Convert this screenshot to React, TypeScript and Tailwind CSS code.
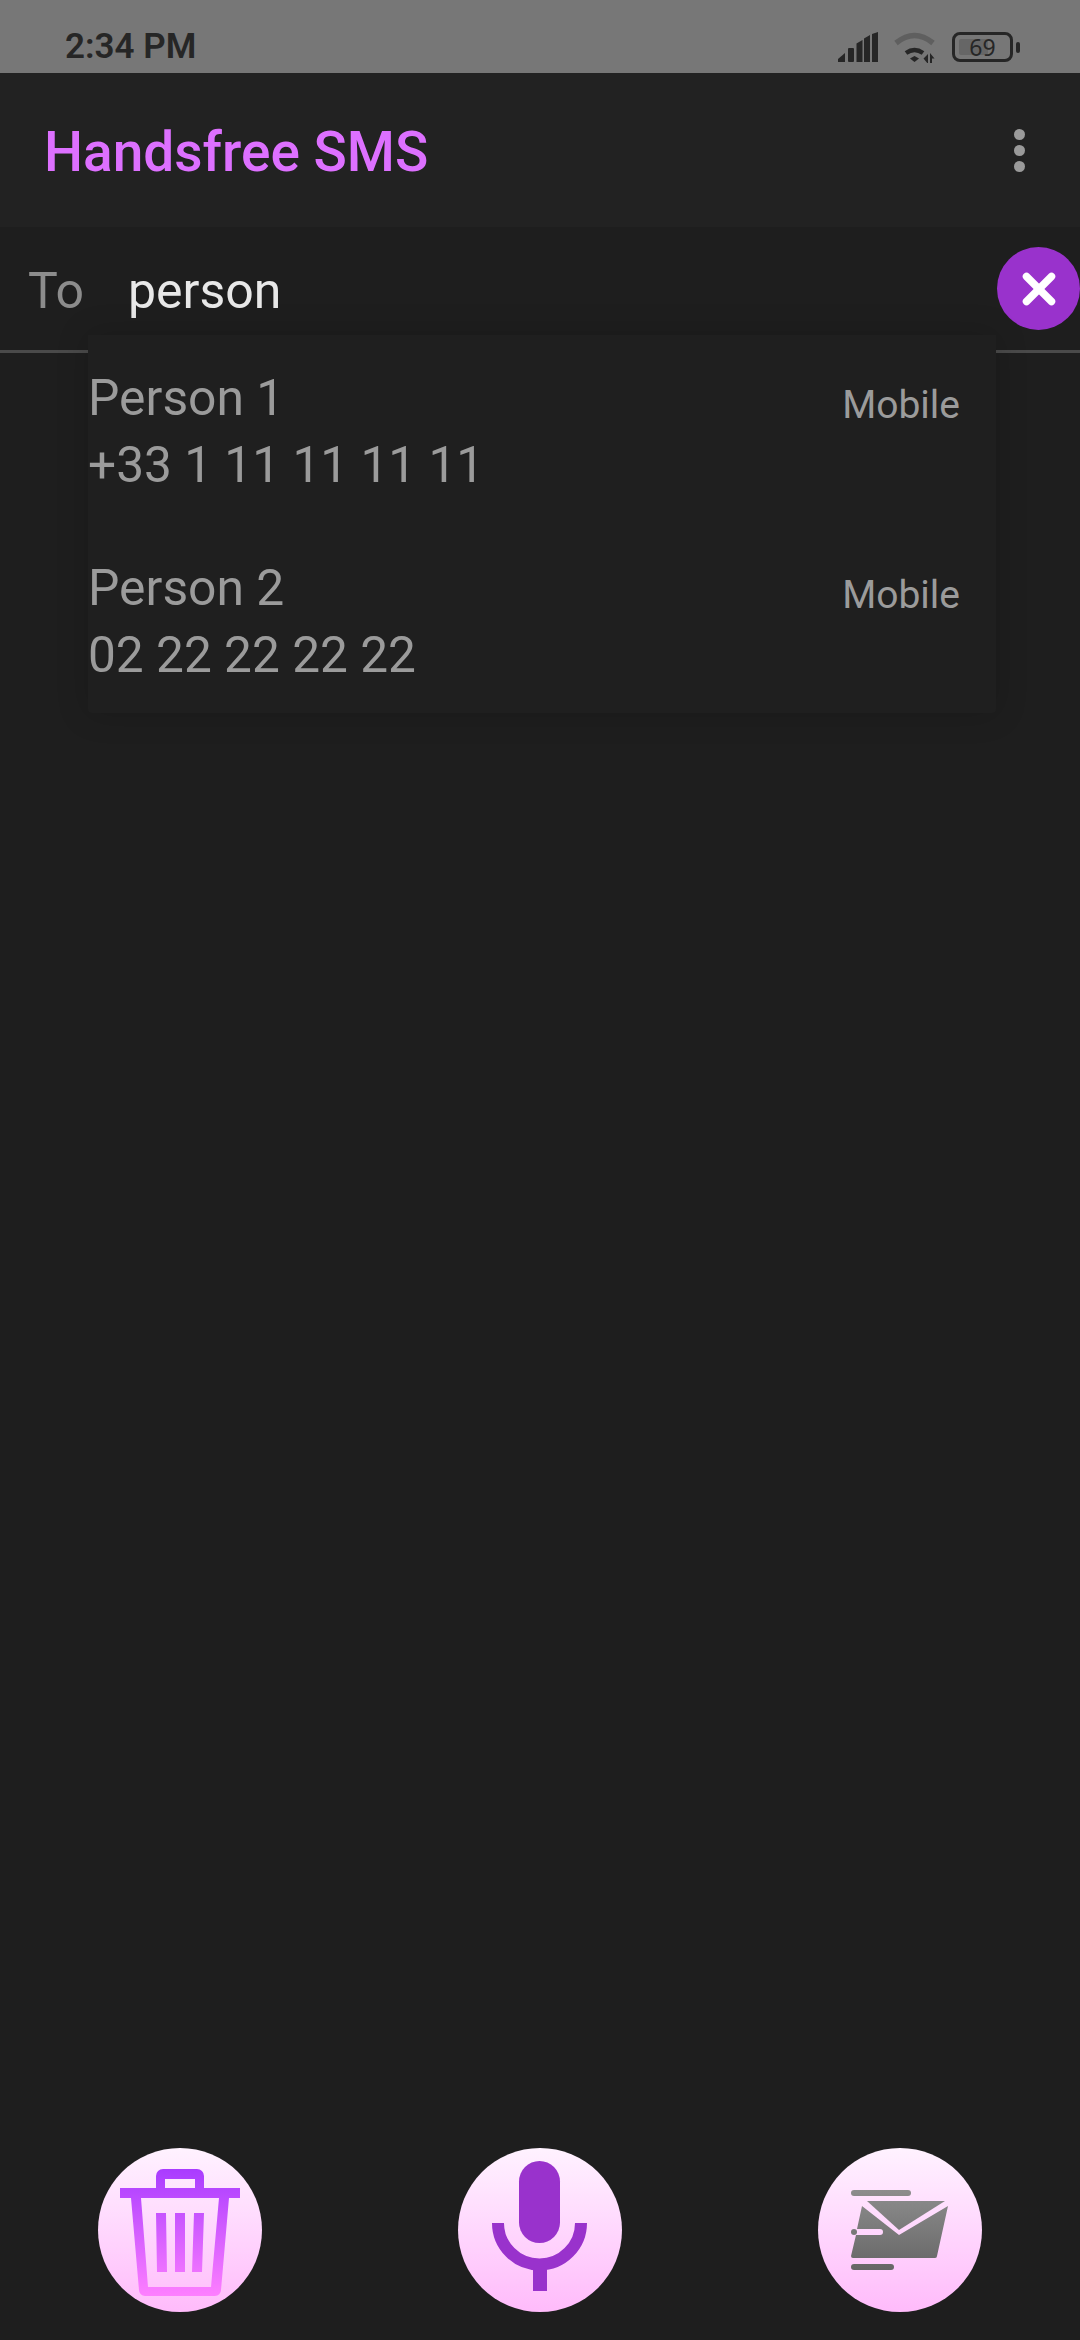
import { X } from "lucide-react";

const contacts = [
  { name: "Person 1", phone: "+33 1 11 11 11 11", type: "Mobile" },
  { name: "Person 2", phone: "02 22 22 22 22", type: "Mobile" },
];

function StatusIcons() {
  return (
    <div className="flex items-center text-[#262626]">
      <svg width="42" height="30" viewBox="0 0 42 30" fill="currentColor" className="mr-[14px]">
        <path d="M1 30v-3l7-6v9z" />
        <rect x="11" y="16" width="6" height="14" rx="1" />
        <path d="M19.500 30V11.500l6-3.500V30z" />
        <path d="M27 30V6.500l6-3.500V30z" />
        <path d="M35 30V2l6-2v30z" />
      </svg>
      <svg width="44" height="32" viewBox="0 0 44 32" fill="none" className="mr-[15px]">
        <path d="M3 12Q21.500-3 40 12" stroke="#5f5f5f" strokeWidth="5.500" />
        <path d="M13 22Q21.500 16 30 22" stroke="currentColor" strokeWidth="4.500" />
        <path d="M17 27.500l4.500-2.500 4.500 2.500-4.500 3.500z" fill="currentColor" />
        <path d="M35 23v10l-4.500-5.500zM37 33V22l4.500 5.500H39V33z" fill="currentColor" />
      </svg>
      <div className="relative flex h-[30px] w-[61px] items-center justify-center rounded-[8px] border-[3px] border-[#262626]">
        <div className="absolute left-[4px] top-[4px] h-[16px] w-[29px] rounded-[2px] bg-[#666666]" />
        <span className="relative font-['Noto_Sans',sans-serif] text-[23px] leading-none">69</span>
      </div>
      <div className="ml-[3px] h-[11px] w-[4px] rounded-[2px] bg-[#262626]" />
    </div>
  );
}

function TrashIcon() {
  return (
    <svg width="164" height="164" viewBox="0 0 164 164">
      <defs>
        <linearGradient id="trashFill" gradientUnits="userSpaceOnUse" x1="0" y1="21" x2="0" y2="150">
          <stop offset="0" stopColor="#a93cff" />
          <stop offset="1" stopColor="#ff80ff" />
        </linearGradient>
      </defs>
      <path
        fill="url(#trashFill)"
        fillRule="evenodd"
        d="M22 40h36V28a7 7 0 0 1 7-7h34a7 7 0 0 1 7 7v12h36v10h-11l-8 92a6 6 0 0 1-6 6H47a6 6 0 0 1-6-6l-8-92H22zM67 31v9h30v-9zM43 50l7 89h63l8-89zM58 65h10l1 59H59zM77 65h10v59H77zM96 65h10l-2 59H94z"
      />
    </svg>
  );
}

function MicIcon() {
  return (
    <svg width="164" height="164" viewBox="0 0 164 164" fill="#9932cc">
      <rect x="61" y="13" width="41" height="82" rx="20.500" />
      <path d="M40 75a41.500 41.500 0 0 0 83 0" fill="none" stroke="#9932cc" strokeWidth="12" />
      <rect x="75" y="118" width="14" height="25" />
    </svg>
  );
}

function SendIcon() {
  return (
    <svg width="164" height="164" viewBox="0 0 164 164">
      <defs>
        <linearGradient id="sendFill" gradientUnits="userSpaceOnUse" x1="0" y1="42" x2="0" y2="122">
          <stop offset="0" stopColor="#8d8d8d" />
          <stop offset="1" stopColor="#666666" />
        </linearGradient>
      </defs>
      <g fill="url(#sendFill)">
        <rect x="33" y="42" width="60" height="6" rx="3" />
        <path d="M49 53h78L81 82z" />
        <path d="M44 58l37 29 49-29-11 50a2 2 0 0 1-2 2H35a2 2 0 0 1-2-2l5-21h24a3 3 0 0 0 0-6H39z" />
        <circle cx="36" cy="84" r="3" />
        <rect x="33" y="116" width="43" height="6" rx="3" />
      </g>
    </svg>
  );
}

function ActionButton({ children }: { children: React.ReactNode }) {
  return (
    <button
      type="button"
      className="h-[164px] w-[164px] overflow-hidden rounded-full bg-gradient-to-b from-[#fff2ff] to-[#ffbbfb]"
    >
      {children}
    </button>
  );
}

export default function App() {
  return (
    <div className="flex h-[2340px] w-[1080px] flex-col overflow-hidden bg-[#1e1e1e] font-['Roboto',sans-serif]">
      <div className="flex h-[73px] items-start justify-between bg-[#777777] pl-[65px] pr-[60px] pt-[31px]">
        <span className="text-[35px] font-semibold leading-[32px] text-[#262626]">2:34 PM</span>
        <StatusIcons />
      </div>

      <header className="flex h-[154px] items-center justify-between bg-[#222222] pl-[44px] pr-[55px]">
        <h1 className="pt-[5px] text-[55px] font-medium leading-none text-[#dd70ff]">Handsfree SMS</h1>
        <div className="flex flex-col gap-[5px]">
          <span className="h-[11px] w-[11px] rounded-full bg-[#9a9a9a]" />
          <span className="h-[11px] w-[11px] rounded-full bg-[#9a9a9a]" />
          <span className="h-[11px] w-[11px] rounded-full bg-[#9a9a9a]" />
        </div>
      </header>

      <div className="relative flex h-[126px] flex-none items-start border-b-[3px] border-[#4a4a4a] pt-[20px]">
        <span className="ml-[28px] pt-[3px] text-[50px] leading-[83px] text-[#8c8c8c]">To</span>
        <span className="ml-[44px] pt-[3px] text-[50px] leading-[83px] text-[#e8e8e8]">person</span>
        <button
          type="button"
          className="ml-auto flex h-[83px] w-[83px] items-center justify-center rounded-full bg-[#9932cc]"
        >
          <X size={50} strokeWidth={3.6} color="#ffffff" />
        </button>

        <ul className="absolute left-[88px] top-[108px] z-10 h-[378px] w-[908px] rounded-b-[4px] bg-[#1f1f1f] shadow-[0_0_32px_rgba(0,0,0,0.18)]">
          {contacts.map((contact) => (
            <li key={contact.name} className="flex h-[190px] justify-between pr-[36px] pt-[30px] text-[#9b9b9b]">
              <div>
                <p className="text-[49.800px] leading-[67px]">{contact.name}</p>
                <p className="text-[49.600px] leading-[67px]">{contact.phone}</p>
              </div>
              <p className="pt-[12px] text-[39px] leading-[56px]">{contact.type}</p>
            </li>
          ))}
        </ul>
      </div>

      <main className="flex flex-1 items-end justify-between pb-[28px] pl-[98px] pr-[98px]">
        <ActionButton>
          <TrashIcon />
        </ActionButton>
        <ActionButton>
          <MicIcon />
        </ActionButton>
        <ActionButton>
          <SendIcon />
        </ActionButton>
      </main>
    </div>
  );
}
